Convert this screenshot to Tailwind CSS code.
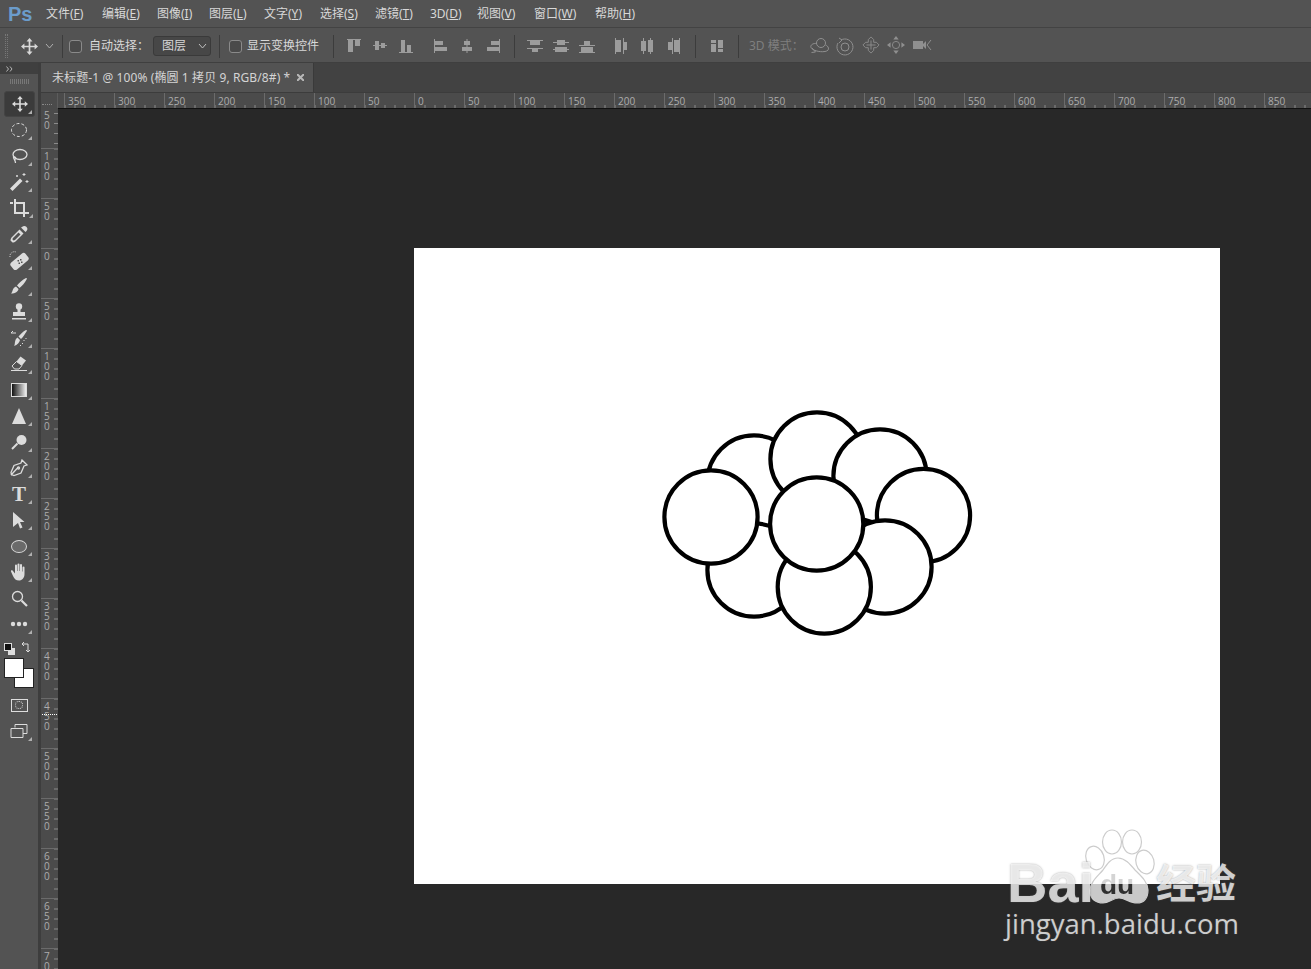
<!DOCTYPE html>
<html lang="zh-CN">
<head>
<meta charset="utf-8">
<title>Photoshop</title>
<script src="https://cdn.jsdelivr.net/npm/@tailwindcss/browser@4"></script>
</head>
<body class="m-0 overflow-hidden bg-[#282828]">
<div class="relative flex h-[969px] w-[1311px] flex-col overflow-hidden bg-[#535353] font-['Noto_Sans','Noto_Sans_CJK_SC',sans-serif] text-[12px] text-[#d8d8d8]">

  <!-- menu bar -->
  <header class="flex h-[28px] shrink-0 items-center border-b border-[#434343] bg-[#535353] pt-[1px]">
    <span class="ml-[8px] w-[38px] font-['Liberation_Sans',sans-serif] text-[20px] leading-none font-bold text-[#6b9ccb]">Ps</span>
    <nav class="flex text-[12px] leading-none">
      <span class="w-[56px]">文件(<span class="underline">F</span>)</span>
      <span class="w-[55px]">编辑(<span class="underline">E</span>)</span>
      <span class="w-[52px]">图像(<span class="underline">I</span>)</span>
      <span class="w-[55px]">图层(<span class="underline">L</span>)</span>
      <span class="w-[56px]">文字(<span class="underline">Y</span>)</span>
      <span class="w-[55px]">选择(<span class="underline">S</span>)</span>
      <span class="w-[55px]">滤镜(<span class="underline">T</span>)</span>
      <span class="w-[47px]">3D(<span class="underline">D</span>)</span>
      <span class="w-[57px]">视图(<span class="underline">V</span>)</span>
      <span class="w-[61px]">窗口(<span class="underline">W</span>)</span>
      <span>帮助(<span class="underline">H</span>)</span>
    </nav>
  </header>

  <!-- options bar -->
  <section class="flex h-[35px] shrink-0 items-center border-b border-[#3f3f3f] bg-[#535353] pt-[2px]">
    <span class="ml-[5px] h-[24px] w-[3px] border-x border-dotted border-[#777]"></span>
    <span class="ml-[11px] flex w-[20px] justify-center">
      <svg class="h-[17px] w-[17px]" viewBox="0 0 20 20" fill="#d8d8d8"><path d="M10 0L13.500 4H11V9H16V6.500L20 10L16 13.500V11H11V16H13.500L10 20L6.500 16H9V11H4V13.500L0 10L4 6.500V9H9V4H6.500Z"/></svg>
    </span>
    <svg class="ml-[6px] h-[8px] w-[9px]" viewBox="0 0 9 8" fill="none" stroke="#b0b0b0"><path d="M1 2L4.500 6L8 2"/></svg>
    <span class="ml-[8px] h-[23px] w-px bg-[#3c3c3c]"></span>
    <span class="ml-[6px] h-[13px] w-[13px] rounded-[3px] border border-[#8a8a8a] bg-[#4a4a4a]"></span>
    <span class="ml-[7px] w-[64px] whitespace-nowrap">自动选择：</span>
    <span class="flex h-[20px] w-[58px] items-center justify-between rounded-[3px] border border-[#3a3a3a] bg-[#474747] pr-[3px] pl-[8px]">图层
      <svg class="h-[8px] w-[9px]" viewBox="0 0 9 8" fill="none" stroke="#c0c0c0"><path d="M1 2L4.500 6L8 2"/></svg>
    </span>
    <span class="ml-[8px] h-[23px] w-px bg-[#3c3c3c]"></span>
    <span class="ml-[9px] h-[13px] w-[13px] rounded-[3px] border border-[#8a8a8a] bg-[#4a4a4a]"></span>
    <span class="ml-[5px] w-[73px] whitespace-nowrap">显示变换控件</span>
    <span class="ml-[13px] h-[23px] w-px bg-[#3c3c3c]"></span>

    <div class="ml-[7px] flex text-[#9c9c9c]">
      <span class="flex w-[26px] justify-center"><svg class="h-[16px] w-[16px]" viewBox="0 0 16 16" fill="currentColor"><path d="M1 1h14v1H1zM2 2h5v12H2zM9 2h5v6H9z"/></svg></span>
      <span class="flex w-[26px] justify-center"><svg class="h-[16px] w-[16px]" viewBox="0 0 16 16" fill="currentColor"><path d="M1 7h14v1H1zM3 3h4v9H3zM9 5h4v5H9z"/></svg></span>
      <span class="flex w-[26px] justify-center"><svg class="h-[16px] w-[16px]" viewBox="0 0 16 16" fill="currentColor"><path d="M1 14h14v1H1zM3 2h4v12H3zM9 7h4v7H9z"/></svg></span>
    </div>
    <div class="ml-[9px] flex text-[#9c9c9c]">
      <span class="flex w-[26px] justify-center"><svg class="h-[16px] w-[16px]" viewBox="0 0 16 16" fill="currentColor"><path d="M1 1h1v14H1zM2 3h8v4H2zM2 9h12v4H2z"/></svg></span>
      <span class="flex w-[26px] justify-center"><svg class="h-[16px] w-[16px]" viewBox="0 0 16 16" fill="currentColor"><path d="M7.500 1h1v14h-1zM5 3h6v4H5zM3 9h10v4H3z"/></svg></span>
      <span class="flex w-[26px] justify-center"><svg class="h-[16px] w-[16px]" viewBox="0 0 16 16" fill="currentColor"><path d="M14 1h1v14h-1zM6 3h8v4H6zM2 9h12v4H2z"/></svg></span>
    </div>
    <span class="ml-[8px] h-[23px] w-px bg-[#3c3c3c]"></span>
    <div class="ml-[7px] flex text-[#9c9c9c]">
      <span class="flex w-[26px] justify-center"><svg class="h-[16px] w-[16px]" viewBox="0 0 16 16" fill="currentColor"><path d="M0 2h16v1H0zM3 3h10v4H3zM0 10h16v1H0zM5 11h6v3H5z"/></svg></span>
      <span class="flex w-[26px] justify-center"><svg class="h-[16px] w-[16px]" viewBox="0 0 16 16" fill="currentColor"><path d="M0 4h16v1H0zM4 2h8v5H4zM0 11h16v1H0zM2 9h12v5H2z"/></svg></span>
      <span class="flex w-[26px] justify-center"><svg class="h-[16px] w-[16px]" viewBox="0 0 16 16" fill="currentColor"><path d="M0 7h16v1H0zM5 3h6v4H5zM0 14h16v1H0zM2 9h12v5H2z"/></svg></span>
    </div>
    <div class="ml-[8px] flex text-[#9c9c9c]">
      <span class="flex w-[26px] justify-center"><svg class="h-[16px] w-[16px]" viewBox="0 0 16 16" fill="currentColor"><path d="M2 0h1v16H2zM3 2h5v12H3zM10 0h1v16h-1zM11 4h3v8h-3z"/></svg></span>
      <span class="flex w-[26px] justify-center"><svg class="h-[16px] w-[16px]" viewBox="0 0 16 16" fill="currentColor"><path d="M4 0h1v16H4zM2 3h5v10H2zM11 0h1v16h-1zM9 2h5v12H9z"/></svg></span>
      <span class="flex w-[26px] justify-center"><svg class="h-[16px] w-[16px]" viewBox="0 0 16 16" fill="currentColor"><path d="M7 0h1v16H7zM3 4h4v8H3zM14 0h1v16h-1zM9 2h5v12H9z"/></svg></span>
    </div>
    <span class="ml-[9px] h-[23px] w-px bg-[#3c3c3c]"></span>
    <span class="ml-[8px] flex w-[26px] justify-center text-[#9c9c9c]"><svg class="h-[16px] w-[16px]" viewBox="0 0 16 16" fill="currentColor"><path d="M2 2h5v3H2zM2 6h5v8H2zM9 2h5v8H9zM9 11h5v3H9z"/></svg></span>
    <span class="ml-[8px] h-[23px] w-px bg-[#3c3c3c]"></span>
    <span class="ml-[10px] w-[57px] whitespace-nowrap text-[#7f7f7f]">3D 模式：</span>
    <div class="flex text-[#8f8f8f]">
      <span class="flex w-[26px] justify-center"><svg class="h-[20px] w-[20px]" viewBox="0 0 20 20" fill="none" stroke="currentColor"><circle cx="12" cy="7" r="4.500"/><path d="M8 7.500C4 7 1 9 2 11.500s8 5 14 4 3-6 .5-6.500M3 12l3.500 4-4 .5"/></svg></span>
      <span class="flex w-[26px] justify-center"><svg class="h-[20px] w-[20px]" viewBox="0 0 20 20" fill="none" stroke="currentColor"><circle cx="10" cy="11" r="4"/><path d="M6 4a8 8 0 1 1-3 3M4 2l3 2-3 3"/></svg></span>
      <span class="flex w-[25px] justify-center"><svg class="h-[18px] w-[18px]" viewBox="0 0 20 20" fill="none" stroke="currentColor"><path d="M10 1l3 3v3h3l3 3-3 3h-3v3l-3 3-3-3v-3H4l-3-3 3-3h3V4z"/><path d="M10 5v10M5 10h10"/></svg></span>
      <span class="flex w-[26px] justify-center"><svg class="h-[18px] w-[18px]" viewBox="0 0 20 20" fill="currentColor"><path d="M10 0l3 4H7zM10 20l-3-4h6zM0 10l4-3v6zM20 10l-4 3V7z"/><circle cx="10" cy="10" r="4" fill="none" stroke="currentColor"/></svg></span>
      <span class="flex w-[26px] justify-center"><svg class="h-[18px] w-[20px]" viewBox="0 0 20 18" fill="currentColor"><path d="M1 5h10v8H1zM11 8l3-3v8l-3-3z"/><path d="M19 4l-4 5 4 5" fill="none" stroke="currentColor"/></svg></span>
    </div>
  </section>

  <!-- work area -->
  <main class="flex min-h-0 flex-1">
    <!-- tools -->
    <aside class="flex w-[39px] shrink-0 flex-col border-r border-[#3d3d3d] bg-[#535353]">
      <div class="flex h-[11px] items-center bg-[#3f3f3f] pl-[6px]">
        <svg class="h-[6px] w-[7px]" viewBox="0 0 7 6" fill="none" stroke="#b5b5b5"><path d="M.5.500l2 2.500-2 2.500M4 .500L6 3 4 5.500"/></svg>
      </div>
      <div class="mt-[5px] ml-[10px] h-[5px] w-[19px] bg-[repeating-linear-gradient(to_right,#777_0,#777_1px,transparent_1px,transparent_2px)]"></div>
      <div class="mt-[7px] flex flex-col text-[#dcdcdc]">

        <div class="relative mr-[3px] ml-[4px] flex h-[26px] items-center justify-center rounded-[3px] border border-[#444] bg-[#3b3b3b]">
          <svg class="h-[16px] w-[16px]" viewBox="0 0 20 20" fill="currentColor"><path d="M10 0L13.500 4H11V9H16V6.500L20 10L16 13.500V11H11V16H13.500L10 20L6.500 16H9V11H4V13.500L0 10L4 6.500V9H9V4H6.500Z"/></svg>
          <i class="absolute right-[2px] bottom-[2px] border-b-[4px] border-l-[4px] border-b-[#b0b0b0] border-l-transparent"></i>
        </div>

        <div class="relative flex h-[26px] items-center justify-center">
          <svg class="h-[18px] w-[18px]" viewBox="0 0 18 18" fill="none" stroke="currentColor"><ellipse cx="9" cy="9" rx="7.500" ry="6.500" stroke-dasharray="3 2"/></svg>
          <i class="absolute right-[6px] bottom-[3px] border-b-[4px] border-l-[4px] border-b-[#b0b0b0] border-l-transparent"></i>
        </div>
        <div class="relative flex h-[26px] items-center justify-center">
          <svg class="h-[18px] w-[18px]" viewBox="0 0 18 18" fill="none" stroke="currentColor" stroke-width="1.300"><ellipse cx="10" cy="7.500" rx="7" ry="5"/><path d="M3.500 10c0 2 2 3 2 6M3.500 10c1.500-.5 3 1 2 2.500"/></svg>
          <i class="absolute right-[6px] bottom-[3px] border-b-[4px] border-l-[4px] border-b-[#b0b0b0] border-l-transparent"></i>
        </div>
        <div class="relative flex h-[26px] items-center justify-center">
          <svg class="h-[20px] w-[20px]" viewBox="0 0 20 20" fill="currentColor"><path d="M1 16.500L11 6.500 13.500 9 3.500 19z"/><path d="M15 1v3M13.500 2.500h3M18 8v3M16.500 9.500h3M8 3v2M7 4h2" stroke="currentColor" fill="none"/></svg>
          <i class="absolute right-[6px] bottom-[3px] border-b-[4px] border-l-[4px] border-b-[#b0b0b0] border-l-transparent"></i>
        </div>
        <div class="relative flex h-[26px] items-center justify-center">
          <svg class="h-[19px] w-[19px]" viewBox="0 0 19 19" fill="none" stroke="currentColor" stroke-width="2"><path d="M0 4h3M5 0v14h14M5 4h9v14"/></svg>
          <i class="absolute right-[5px] bottom-[3px] border-b-[4px] border-l-[4px] border-b-[#b0b0b0] border-l-transparent"></i>
        </div>
        <div class="relative flex h-[26px] items-center justify-center">
          <svg class="h-[18px] w-[18px]" viewBox="0 0 18 18" fill="currentColor"><path d="M11 2.500l4.500 4.500 1-1c1.500-1.500 1-3-.2-4.200S13.500.500 12 2zM9.500 4.500l4 4L6 16c-1 1-2.500 1.500-3.500 1.500L.5 15.500c0-1 .5-2.500 1.500-3.500z"/><path d="M8.500 7.500l-5 5c-.8.800-1 1.500-1 2l1 1c.500 0 1.200-.2 2-1l5-5z" fill="#535353"/></svg>
          <i class="absolute right-[6px] bottom-[3px] border-b-[4px] border-l-[4px] border-b-[#b0b0b0] border-l-transparent"></i>
        </div>
        <div class="relative flex h-[26px] items-center justify-center">
          <svg class="h-[20px] w-[20px]" viewBox="0 0 20 20" fill="currentColor"><rect x="1" y="7" width="19" height="9" rx="2.500" transform="rotate(-40 10.500 11.500)"/><path d="M8.500 10h1.500v1.500H8.500zM11 9h1.500v1.500H11zM9.500 12.500H11V14H9.500zM12 11.500h1.500V13H12z" fill="#535353"/><path d="M1 7a4.500 4.500 0 0 1 6-5" fill="none" stroke="currentColor" stroke-dasharray="1 1"/></svg>
          <i class="absolute right-[6px] bottom-[3px] border-b-[4px] border-l-[4px] border-b-[#b0b0b0] border-l-transparent"></i>
        </div>
        <div class="relative flex h-[26px] items-center justify-center">
          <svg class="h-[18px] w-[18px]" viewBox="0 0 18 18" fill="currentColor"><path d="M16 1c.8 0 1 .500.700 1.200C15 5.500 12 9 9.500 11L7 8.500C9 6 12.500 2.500 16 1zM6 9.500L8.500 12c-.5 2.500-3 4.500-7.500 4.500 2-1.500 1-5.500 5-7z"/></svg>
          <i class="absolute right-[6px] bottom-[3px] border-b-[4px] border-l-[4px] border-b-[#b0b0b0] border-l-transparent"></i>
        </div>
        <div class="relative flex h-[26px] items-center justify-center">
          <svg class="h-[18px] w-[18px]" viewBox="0 0 18 18" fill="currentColor"><circle cx="9" cy="3.500" r="3.200"/><path d="M7.500 6h3v3h4.500v4H3V9h4.500zM2 15h14v1.500H2z"/></svg>
          <i class="absolute right-[6px] bottom-[3px] border-b-[4px] border-l-[4px] border-b-[#b0b0b0] border-l-transparent"></i>
        </div>
        <div class="relative flex h-[26px] items-center justify-center">
          <svg class="h-[19px] w-[19px]" viewBox="0 0 19 19" fill="currentColor"><path d="M16 1c.8 0 1 .500.700 1.200C15 5 13 8 11 10L8.500 7.500C10.500 5.500 13 2.500 16 1zM7.500 8.500L10 11c-.500 2.500-2.500 5-6 6 1.500-2 0-6 3.500-8.500z"/><path d="M1 4h5M1 4l2-2M14 11v1M12.500 14v1M10.500 16v1M16 9v1" fill="none" stroke="currentColor"/></svg>
          <i class="absolute right-[6px] bottom-[3px] border-b-[4px] border-l-[4px] border-b-[#b0b0b0] border-l-transparent"></i>
        </div>
        <div class="relative flex h-[26px] items-center justify-center">
          <svg class="h-[18px] w-[18px]" viewBox="0 0 18 18" fill="currentColor"><path d="M10.500 1.500L16 5.500 12 10.500 6.500 6.500z"/><path d="M6.500 6.500L12 10.500 9 14H4.500L2 11zM1 15.500h16" fill="none" stroke="currentColor"/></svg>
          <i class="absolute right-[6px] bottom-[3px] border-b-[4px] border-l-[4px] border-b-[#b0b0b0] border-l-transparent"></i>
        </div>
        <div class="relative flex h-[26px] items-center justify-center">
          <span class="h-[14px] w-[16px] border border-[#ddd] bg-[linear-gradient(to_right,#111,#eee)]"></span>
          <i class="absolute right-[6px] bottom-[3px] border-b-[4px] border-l-[4px] border-b-[#b0b0b0] border-l-transparent"></i>
        </div>
        <div class="relative flex h-[26px] items-center justify-center">
          <svg class="h-[16px] w-[14px]" viewBox="0 0 14 16" fill="currentColor"><path d="M7 0l7 16H0z"/></svg>
          <i class="absolute right-[6px] bottom-[3px] border-b-[4px] border-l-[4px] border-b-[#b0b0b0] border-l-transparent"></i>
        </div>
        <div class="relative flex h-[26px] items-center justify-center">
          <svg class="h-[17px] w-[17px]" viewBox="0 0 17 17" fill="currentColor"><circle cx="10.500" cy="6" r="5"/><path d="M6.500 9.500L1 15" stroke="currentColor" stroke-width="2" fill="none"/></svg>
          <i class="absolute right-[6px] bottom-[3px] border-b-[4px] border-l-[4px] border-b-[#b0b0b0] border-l-transparent"></i>
        </div>
        <div class="relative flex h-[26px] items-center justify-center">
          <svg class="h-[18px] w-[18px]" viewBox="0 0 18 18" fill="none" stroke="currentColor" stroke-width="1.300"><path d="M12 1l5 5-3 1-3 7-7 2.500-2.500-1L8 8.500 1.500 15.500l-.5-2L4 6.500l7-2.500z"/><circle cx="8.500" cy="9" r="1"/></svg>
          <i class="absolute right-[6px] bottom-[3px] border-b-[4px] border-l-[4px] border-b-[#b0b0b0] border-l-transparent"></i>
        </div>
        <div class="relative flex h-[26px] items-center justify-center">
          <span class="font-['Liberation_Serif',serif] text-[21px] leading-none font-bold">T</span>
          <i class="absolute right-[6px] bottom-[3px] border-b-[4px] border-l-[4px] border-b-[#b0b0b0] border-l-transparent"></i>
        </div>
        <div class="relative flex h-[26px] items-center justify-center">
          <svg class="h-[17px] w-[12px]" viewBox="0 0 12 17" fill="currentColor"><path d="M0 0l11.500 10H7l2.500 5.500-2.500 1L5 11l-5 4z"/></svg>
          <i class="absolute right-[6px] bottom-[3px] border-b-[4px] border-l-[4px] border-b-[#b0b0b0] border-l-transparent"></i>
        </div>
        <div class="relative flex h-[26px] items-center justify-center">
          <span class="h-[13px] w-[16px] rounded-[50%] border border-[#d8d8d8] bg-[#6a6a6a]"></span>
          <i class="absolute right-[6px] bottom-[3px] border-b-[4px] border-l-[4px] border-b-[#b0b0b0] border-l-transparent"></i>
        </div>
        <div class="relative flex h-[26px] items-center justify-center">
          <svg class="h-[18px] w-[18px]" viewBox="0 0 18 18" fill="currentColor"><path d="M5 2.500a1 1 0 0 1 2 0V8h.5V1.500a1 1 0 0 1 2 0V8h.5V2a1 1 0 0 1 2 0v6.500h.5V4.500a1 1 0 0 1 2 0V11c0 4-2.500 6.500-5.500 6.500-3 0-4.500-1.500-6-4.500L1 8.500c-.4-1.200 1-1.800 1.800-.8L5 10.500z"/></svg>
          <i class="absolute right-[6px] bottom-[3px] border-b-[4px] border-l-[4px] border-b-[#b0b0b0] border-l-transparent"></i>
        </div>
        <div class="relative flex h-[26px] items-center justify-center">
          <svg class="h-[17px] w-[17px]" viewBox="0 0 17 17" fill="none" stroke="currentColor"><circle cx="6.500" cy="6.500" r="5" stroke-width="1.300"/><path d="M10.500 10.500l5.500 5.500" stroke-width="2.200"/></svg>
        </div>
        <div class="relative flex h-[26px] items-center justify-center">
          <svg class="h-[6px] w-[18px]" viewBox="0 0 18 6" fill="currentColor"><circle cx="3" cy="3" r="2.200"/><circle cx="9" cy="3" r="2.200"/><circle cx="15" cy="3" r="2.200"/></svg>
          <i class="absolute right-[6px] bottom-[3px] border-b-[4px] border-l-[4px] border-b-[#b0b0b0] border-l-transparent"></i>
        </div>

        <!-- colours -->
        <div class="relative h-[60px]">
          <span class="absolute top-[11px] left-[8px] h-[7px] w-[7px] bg-[#ddd]"></span>
          <span class="absolute top-[6px] left-[4px] h-[8px] w-[8px] border border-[#ddd] bg-[#111]"></span>
          <svg class="absolute top-[5px] left-[22px] h-[12px] w-[11px]" viewBox="0 0 11 12" fill="none" stroke="#ddd"><path d="M0 2h6v7M0 2l2-2M0 2l2 2M6 10l-2-2M6 10l2-2"/></svg>
          <span class="absolute top-[31px] left-[14px] h-[20px] w-[20px] border border-[#222] bg-white"></span>
          <span class="absolute top-[21px] left-[4px] h-[20px] w-[20px] border border-[#222] bg-white"></span>
        </div>
        <div class="mt-[-5px] flex h-[26px] items-center justify-center">
          <span class="flex h-[13px] w-[17px] items-center justify-center border border-[#ddd]"><span class="h-[8px] w-[8px] rounded-full border border-dotted border-[#ddd]"></span></span>
        </div>
        <div class="relative flex h-[26px] items-center justify-center">
          <svg class="h-[15px] w-[18px]" viewBox="0 0 18 15" fill="none" stroke="currentColor"><path d="M5 3.500V.500h12v9h-4"/><path d="M1 4.500h12v9H1z"/></svg>
          <i class="absolute right-[6px] bottom-[3px] border-b-[4px] border-l-[4px] border-b-[#b0b0b0] border-l-transparent"></i>
        </div>
      </div>
    </aside>
    <span class="w-[2px] shrink-0 bg-[#3d3d3d]"></span>

    <div class="flex min-w-0 flex-1 flex-col">
      <!-- tab row -->
      <div class="flex h-[29px] shrink-0 bg-[#424242]">
        <div class="flex w-[273px] items-center border-r border-[#3a3a3a] bg-[#535353] pl-[11px] text-[12px] tracking-[0.1px] whitespace-nowrap text-[#d4d4d4]">
          <span class="w-[245px]">未标题-1 @ 100% (椭圆 1 拷贝 9, RGB/8#) *</span>
          <svg class="h-[7px] w-[7px]" viewBox="0 0 7 7" stroke="#b8b8b8" stroke-width="2"><path d="M0 0l7 7M7 0L0 7"/></svg>
        </div>
      </div>

      <!-- horizontal ruler -->
      <div class="flex h-[16px] shrink-0 border-t border-[#3c3c3c] bg-[#4b4b4b] font-['Open_Sans',sans-serif] text-[10px] leading-[17px] text-[#adadad]">
        <div class="relative w-[17px] shrink-0 border-r border-[#5c5c5c]"><span class="absolute right-[5px] bottom-[3px] h-px w-[10px] border-t border-dotted border-[#888]"></span></div>
        <div class="w-[6px] shrink-0"></div>
        <div class="w-[50px] shrink-0 border-l border-[#6b6b6b] bg-[linear-gradient(to_right,#8a8a8a_1px,transparent_1px)] bg-[length:10px_3px] bg-bottom bg-repeat-x pl-[3px]">350</div>
        <div class="w-[50px] shrink-0 border-l border-[#6b6b6b] bg-[linear-gradient(to_right,#8a8a8a_1px,transparent_1px)] bg-[length:10px_3px] bg-bottom bg-repeat-x pl-[3px]">300</div>
        <div class="w-[50px] shrink-0 border-l border-[#6b6b6b] bg-[linear-gradient(to_right,#8a8a8a_1px,transparent_1px)] bg-[length:10px_3px] bg-bottom bg-repeat-x pl-[3px]">250</div>
        <div class="w-[50px] shrink-0 border-l border-[#6b6b6b] bg-[linear-gradient(to_right,#8a8a8a_1px,transparent_1px)] bg-[length:10px_3px] bg-bottom bg-repeat-x pl-[3px]">200</div>
        <div class="w-[50px] shrink-0 border-l border-[#6b6b6b] bg-[linear-gradient(to_right,#8a8a8a_1px,transparent_1px)] bg-[length:10px_3px] bg-bottom bg-repeat-x pl-[3px]">150</div>
        <div class="w-[50px] shrink-0 border-l border-[#6b6b6b] bg-[linear-gradient(to_right,#8a8a8a_1px,transparent_1px)] bg-[length:10px_3px] bg-bottom bg-repeat-x pl-[3px]">100</div>
        <div class="w-[50px] shrink-0 border-l border-[#6b6b6b] bg-[linear-gradient(to_right,#8a8a8a_1px,transparent_1px)] bg-[length:10px_3px] bg-bottom bg-repeat-x pl-[3px]">50</div>
        <div class="w-[50px] shrink-0 border-l border-[#6b6b6b] bg-[linear-gradient(to_right,#8a8a8a_1px,transparent_1px)] bg-[length:10px_3px] bg-bottom bg-repeat-x pl-[3px]">0</div>
        <div class="w-[50px] shrink-0 border-l border-[#6b6b6b] bg-[linear-gradient(to_right,#8a8a8a_1px,transparent_1px)] bg-[length:10px_3px] bg-bottom bg-repeat-x pl-[3px]">50</div>
        <div class="w-[50px] shrink-0 border-l border-[#6b6b6b] bg-[linear-gradient(to_right,#8a8a8a_1px,transparent_1px)] bg-[length:10px_3px] bg-bottom bg-repeat-x pl-[3px]">100</div>
        <div class="w-[50px] shrink-0 border-l border-[#6b6b6b] bg-[linear-gradient(to_right,#8a8a8a_1px,transparent_1px)] bg-[length:10px_3px] bg-bottom bg-repeat-x pl-[3px]">150</div>
        <div class="w-[50px] shrink-0 border-l border-[#6b6b6b] bg-[linear-gradient(to_right,#8a8a8a_1px,transparent_1px)] bg-[length:10px_3px] bg-bottom bg-repeat-x pl-[3px]">200</div>
        <div class="w-[50px] shrink-0 border-l border-[#6b6b6b] bg-[linear-gradient(to_right,#8a8a8a_1px,transparent_1px)] bg-[length:10px_3px] bg-bottom bg-repeat-x pl-[3px]">250</div>
        <div class="w-[50px] shrink-0 border-l border-[#6b6b6b] bg-[linear-gradient(to_right,#8a8a8a_1px,transparent_1px)] bg-[length:10px_3px] bg-bottom bg-repeat-x pl-[3px]">300</div>
        <div class="w-[50px] shrink-0 border-l border-[#6b6b6b] bg-[linear-gradient(to_right,#8a8a8a_1px,transparent_1px)] bg-[length:10px_3px] bg-bottom bg-repeat-x pl-[3px]">350</div>
        <div class="w-[50px] shrink-0 border-l border-[#6b6b6b] bg-[linear-gradient(to_right,#8a8a8a_1px,transparent_1px)] bg-[length:10px_3px] bg-bottom bg-repeat-x pl-[3px]">400</div>
        <div class="w-[50px] shrink-0 border-l border-[#6b6b6b] bg-[linear-gradient(to_right,#8a8a8a_1px,transparent_1px)] bg-[length:10px_3px] bg-bottom bg-repeat-x pl-[3px]">450</div>
        <div class="w-[50px] shrink-0 border-l border-[#6b6b6b] bg-[linear-gradient(to_right,#8a8a8a_1px,transparent_1px)] bg-[length:10px_3px] bg-bottom bg-repeat-x pl-[3px]">500</div>
        <div class="w-[50px] shrink-0 border-l border-[#6b6b6b] bg-[linear-gradient(to_right,#8a8a8a_1px,transparent_1px)] bg-[length:10px_3px] bg-bottom bg-repeat-x pl-[3px]">550</div>
        <div class="w-[50px] shrink-0 border-l border-[#6b6b6b] bg-[linear-gradient(to_right,#8a8a8a_1px,transparent_1px)] bg-[length:10px_3px] bg-bottom bg-repeat-x pl-[3px]">600</div>
        <div class="w-[50px] shrink-0 border-l border-[#6b6b6b] bg-[linear-gradient(to_right,#8a8a8a_1px,transparent_1px)] bg-[length:10px_3px] bg-bottom bg-repeat-x pl-[3px]">650</div>
        <div class="w-[50px] shrink-0 border-l border-[#6b6b6b] bg-[linear-gradient(to_right,#8a8a8a_1px,transparent_1px)] bg-[length:10px_3px] bg-bottom bg-repeat-x pl-[3px]">700</div>
        <div class="w-[50px] shrink-0 border-l border-[#6b6b6b] bg-[linear-gradient(to_right,#8a8a8a_1px,transparent_1px)] bg-[length:10px_3px] bg-bottom bg-repeat-x pl-[3px]">750</div>
        <div class="w-[50px] shrink-0 border-l border-[#6b6b6b] bg-[linear-gradient(to_right,#8a8a8a_1px,transparent_1px)] bg-[length:10px_3px] bg-bottom bg-repeat-x pl-[3px]">800</div>
        <div class="w-[50px] shrink-0 border-l border-[#6b6b6b] bg-[linear-gradient(to_right,#8a8a8a_1px,transparent_1px)] bg-[length:10px_3px] bg-bottom bg-repeat-x pl-[3px]">850</div>
      </div>

      <div class="flex min-h-0 flex-1">
        <!-- vertical ruler -->
        <div class="relative flex w-[17px] shrink-0 flex-col overflow-hidden bg-[#4b4b4b] font-['Open_Sans',sans-serif] text-[10px] leading-[10px] text-[#adadad]">
          <div class="h-[40px] shrink-0 bg-[linear-gradient(to_bottom,#8a8a8a_1px,transparent_1px)] bg-[length:4px_10px] bg-right bg-repeat-y pt-[2px] pl-[3px]">5<br>0</div>
          <div class="h-[50px] shrink-0 border-t border-[#6b6b6b] bg-[linear-gradient(to_bottom,#8a8a8a_1px,transparent_1px)] bg-[length:4px_10px] bg-right bg-repeat-y pt-[2px] pl-[3px]">1<br>0<br>0</div>
          <div class="h-[50px] shrink-0 border-t border-[#6b6b6b] bg-[linear-gradient(to_bottom,#8a8a8a_1px,transparent_1px)] bg-[length:4px_10px] bg-right bg-repeat-y pt-[2px] pl-[3px]">5<br>0</div>
          <div class="h-[50px] shrink-0 border-t border-[#6b6b6b] bg-[linear-gradient(to_bottom,#8a8a8a_1px,transparent_1px)] bg-[length:4px_10px] bg-right bg-repeat-y pt-[2px] pl-[3px]">0</div>
          <div class="h-[50px] shrink-0 border-t border-[#6b6b6b] bg-[linear-gradient(to_bottom,#8a8a8a_1px,transparent_1px)] bg-[length:4px_10px] bg-right bg-repeat-y pt-[2px] pl-[3px]">5<br>0</div>
          <div class="h-[50px] shrink-0 border-t border-[#6b6b6b] bg-[linear-gradient(to_bottom,#8a8a8a_1px,transparent_1px)] bg-[length:4px_10px] bg-right bg-repeat-y pt-[2px] pl-[3px]">1<br>0<br>0</div>
          <div class="h-[50px] shrink-0 border-t border-[#6b6b6b] bg-[linear-gradient(to_bottom,#8a8a8a_1px,transparent_1px)] bg-[length:4px_10px] bg-right bg-repeat-y pt-[2px] pl-[3px]">1<br>5<br>0</div>
          <div class="h-[50px] shrink-0 border-t border-[#6b6b6b] bg-[linear-gradient(to_bottom,#8a8a8a_1px,transparent_1px)] bg-[length:4px_10px] bg-right bg-repeat-y pt-[2px] pl-[3px]">2<br>0<br>0</div>
          <div class="h-[50px] shrink-0 border-t border-[#6b6b6b] bg-[linear-gradient(to_bottom,#8a8a8a_1px,transparent_1px)] bg-[length:4px_10px] bg-right bg-repeat-y pt-[2px] pl-[3px]">2<br>5<br>0</div>
          <div class="h-[50px] shrink-0 border-t border-[#6b6b6b] bg-[linear-gradient(to_bottom,#8a8a8a_1px,transparent_1px)] bg-[length:4px_10px] bg-right bg-repeat-y pt-[2px] pl-[3px]">3<br>0<br>0</div>
          <div class="h-[50px] shrink-0 border-t border-[#6b6b6b] bg-[linear-gradient(to_bottom,#8a8a8a_1px,transparent_1px)] bg-[length:4px_10px] bg-right bg-repeat-y pt-[2px] pl-[3px]">3<br>5<br>0</div>
          <div class="h-[50px] shrink-0 border-t border-[#6b6b6b] bg-[linear-gradient(to_bottom,#8a8a8a_1px,transparent_1px)] bg-[length:4px_10px] bg-right bg-repeat-y pt-[2px] pl-[3px]">4<br>0<br>0</div>
          <div class="h-[50px] shrink-0 border-t border-[#6b6b6b] bg-[linear-gradient(to_bottom,#8a8a8a_1px,transparent_1px)] bg-[length:4px_10px] bg-right bg-repeat-y pt-[2px] pl-[3px]">4<br>5<br>0</div>
          <div class="h-[50px] shrink-0 border-t border-[#6b6b6b] bg-[linear-gradient(to_bottom,#8a8a8a_1px,transparent_1px)] bg-[length:4px_10px] bg-right bg-repeat-y pt-[2px] pl-[3px]">5<br>0<br>0</div>
          <div class="h-[50px] shrink-0 border-t border-[#6b6b6b] bg-[linear-gradient(to_bottom,#8a8a8a_1px,transparent_1px)] bg-[length:4px_10px] bg-right bg-repeat-y pt-[2px] pl-[3px]">5<br>5<br>0</div>
          <div class="h-[50px] shrink-0 border-t border-[#6b6b6b] bg-[linear-gradient(to_bottom,#8a8a8a_1px,transparent_1px)] bg-[length:4px_10px] bg-right bg-repeat-y pt-[2px] pl-[3px]">6<br>0<br>0</div>
          <div class="h-[50px] shrink-0 border-t border-[#6b6b6b] bg-[linear-gradient(to_bottom,#8a8a8a_1px,transparent_1px)] bg-[length:4px_10px] bg-right bg-repeat-y pt-[2px] pl-[3px]">6<br>5<br>0</div>
          <div class="h-[50px] shrink-0 border-t border-[#6b6b6b] bg-[linear-gradient(to_bottom,#8a8a8a_1px,transparent_1px)] bg-[length:4px_10px] bg-right bg-repeat-y pt-[2px] pl-[3px]">7<br>0</div>
          <span class="absolute top-[606px] left-[1px] h-px w-[15px] border-t border-dotted border-white"></span>
        </div>

        <!-- document window -->
        <div class="min-w-0 flex-1 border-t border-[#111] bg-[#282828] pt-[139px] pl-[356px]">
          <svg class="block h-[636px] w-[806px] bg-white" viewBox="0 0 806 636" fill="#fff" stroke="#000" stroke-width="4.200">
            <circle cx="340" cy="234" r="46.600"/>
            <circle cx="403" cy="211" r="46.600"/>
            <circle cx="466" cy="228" r="46.600"/>
            <circle cx="509.500" cy="267.500" r="46.600"/>
            <circle cx="471" cy="319" r="46.600"/>
            <circle cx="340" cy="322" r="46.600"/>
            <circle cx="410.300" cy="339" r="46.600"/>
            <circle cx="297" cy="269" r="46.600"/>
            <circle cx="402.700" cy="276" r="46.600"/>
          </svg>
        </div>
      </div>
    </div>
  </main>

  <!-- watermark -->
  <div class="absolute top-[826px] left-[1003px] h-[120px] w-[240px] text-white/75 [text-shadow:0_0_2px_rgba(90,90,90,0.55)]">
    <svg class="absolute top-[0px] left-[80px] h-[80px] w-[76px]" viewBox="0 0 76 80" fill="none" stroke-width="1.200">
      <ellipse cx="12" cy="32" rx="9" ry="12" transform="rotate(-18 12 32)" stroke="#ccc"/>
      <ellipse cx="29" cy="16" rx="9.500" ry="12" stroke="#ccc"/>
      <ellipse cx="49" cy="16" rx="9.500" ry="12" stroke="#ccc"/>
      <ellipse cx="62" cy="36" rx="9" ry="12" transform="rotate(-15 62 36)" stroke="#ccc"/>
      <path d="M35 32C28 32 24 38 20 44C15 50 7 56 7 65C7 73 13 77 20 77C26 77 30 72 36 72C42 72 47 77 54 77C61 77 65 72 65 64C65 56 58 50 52 44C47 38 42 32 35 32Z" fill="#fff" fill-opacity="0.75" stroke="#ccc"/>
    </svg>
    <span class="absolute top-[27px] left-[4px] font-['Liberation_Sans',sans-serif] text-[56px] leading-[60px] font-bold">Bai</span>
    <span class="absolute top-[45px] left-[97px] bg-[linear-gradient(#d4d4d4_13px,#2f2f2f_13px)] bg-clip-text font-['Liberation_Sans',sans-serif] text-[28px] leading-[28px] font-bold text-transparent [text-shadow:none]">du</span>
    <span class="absolute top-[32px] left-[153px] font-['Noto_Sans_CJK_SC',sans-serif] text-[40px] leading-[46px] font-bold whitespace-nowrap">经验</span>
    <span class="absolute top-[80px] left-[2px] font-['Open_Sans',sans-serif] text-[27.5px] leading-[36px] whitespace-nowrap">jingyan.baidu.com</span>
  </div>
</div>
</body>
</html>
